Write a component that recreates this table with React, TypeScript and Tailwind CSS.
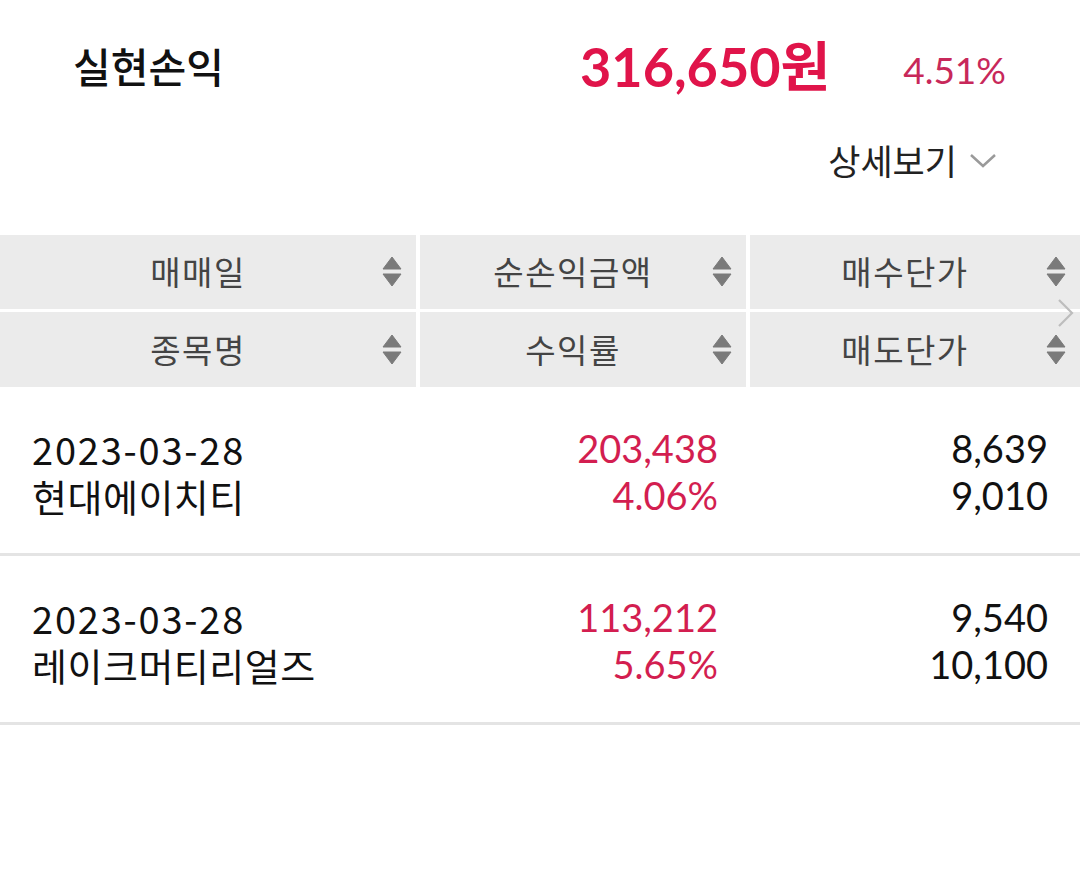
const kr = "font-['Noto_Sans_CJK_KR',sans-serif]";
const num = "font-['Lato','Noto_Sans_CJK_KR',sans-serif]";

interface Trade {
  date: string;
  name: string;
  profit: string;
  rate: string;
  buy: string;
  sell: string;
}

const trades: Trade[] = [
  { date: "2023-03-28", name: "현대에이치티", profit: "203,438", rate: "4.06%", buy: "8,639", sell: "9,010" },
  { date: "2023-03-28", name: "레이크머티리얼즈", profit: "113,212", rate: "5.65%", buy: "9,540", sell: "10,100" },
];

function SortIcon() {
  return (
    <svg width="20" height="32" viewBox="0 0 20 32" className="absolute right-[14px] top-1/2 -translate-y-1/2">
      <path d="M10 1 L19 13 L1 13 Z" fill="#7a7a7a" strokeLinejoin="round" stroke="#7a7a7a" strokeWidth="1" />
      <path d="M1 18 L19 18 L10 30 Z" fill="#7a7a7a" strokeLinejoin="round" stroke="#7a7a7a" strokeWidth="1" />
    </svg>
  );
}

function HeadCell({ label }: { label: string }) {
  return (
    <div className="relative flex items-center justify-center bg-[#ebebeb] pr-[20px]">
      <span className={`${kr} text-[33px] tracking-[1.5px] text-[#444]`}>{label}</span>
      <SortIcon />
    </div>
  );
}

export default function App() {
  return (
    <div className="w-[1080px] h-[875px] bg-white overflow-hidden">
      <div className="flex items-center h-[134px]">
        <div className="w-[580px] pl-[73px]">
          <span className={`${kr} text-[41px] font-medium text-[#111] leading-none`}>실현손익</span>
        </div>
        <span className={`${num} text-[54px] font-bold text-[#e0144a] leading-none`}>316,650원</span>
        <span className={`${num} ml-auto pr-[74px] text-[37px] text-[#c8285a] leading-none mt-[4px]`}>4.51%</span>
      </div>
      <div className="flex items-center justify-end h-[52px] pr-[83px]">
        <span className={`${kr} text-[35px] text-[#222]`}>상세보기</span>
        <svg width="28" height="16" viewBox="0 0 28 16" className="ml-[12px] mt-[2px]">
          <path d="M2 2 L14 13 L26 2" fill="none" stroke="#9a9a9a" strokeWidth="2.5" />
        </svg>
      </div>
      <div className="relative mt-[49px] grid grid-cols-[416px_326px_330px] grid-rows-[74px_75px] gap-x-[4px] gap-y-[3px]">
        <HeadCell label="매매일" />
        <HeadCell label="순손익금액" />
        <HeadCell label="매수단가" />
        <HeadCell label="종목명" />
        <HeadCell label="수익률" />
        <HeadCell label="매도단가" />
        <svg width="18" height="30" viewBox="0 0 18 30" className="absolute right-[5px] top-[63px]">
          <path d="M2 2 L15 15 L2 28" fill="none" stroke="#bdbdbd" strokeWidth="2.2" />
        </svg>
      </div>
      {trades.map((t, i) => (
        <div
          key={i}
          className="mt-[3px] grid grid-cols-[388px_298px_330px] items-center h-[166px] px-[32px] border-b-[3px] border-[#e4e4e4] text-[38px] leading-[47px]"
        >
          <div className={`${kr} text-[#111]`}>
            <div className="tracking-[1.8px]">{t.date}</div>
            <div className="tracking-[0.5px]">{t.name}</div>
          </div>
          <div className={`${num} text-right text-[#d31e50]`}>
            <div>{t.profit}</div>
            <div>{t.rate}</div>
          </div>
          <div className={`${num} text-right text-[#111]`}>
            <div>{t.buy}</div>
            <div>{t.sell}</div>
          </div>
        </div>
      ))}
    </div>
  );
}
